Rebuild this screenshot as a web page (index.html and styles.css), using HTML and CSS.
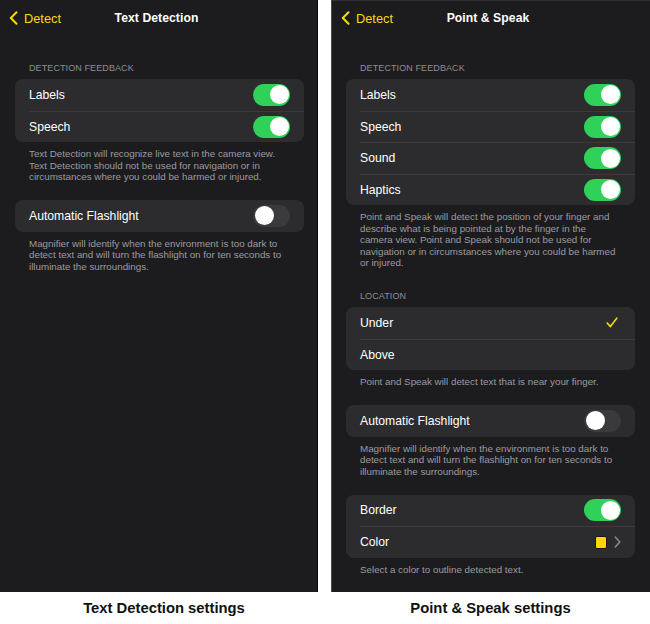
FILE: index.html
```html
<!DOCTYPE html>
<html lang="en">
<head>
<meta charset="utf-8">
<title>Text Detection and Point &amp; Speak settings</title>
<link rel="stylesheet" href="styles.css">
</head>
<body>
<div class="page">
  <div class="col col-left">
    <div class="panel panel-left">
      <div class="nav">
        <div class="back">
          <svg class="chev" width="9" height="14" viewBox="0 0 9 14"><path d="M7.5 1.2 L1.8 7 L7.5 12.8" fill="none" stroke="#f7da0c" stroke-width="2" stroke-linecap="round" stroke-linejoin="round"/></svg>
          <span>Detect</span>
        </div>
        <div class="title">Text Detection</div>
        <div></div>
      </div>
      <div class="header first">Detection Feedback</div>
      <div class="group">
        <div class="row"><span>Labels</span><span class="toggle on"></span></div>
        <div class="row"><span>Speech</span><span class="toggle on"></span></div>
      </div>
      <div class="footer">Text Detection will recognize live text in the camera view.<br>Text Detection should not be used for navigation or in<br>circumstances where you could be harmed or injured.</div>
      <div class="group spaced">
        <div class="row"><span>Automatic Flashlight</span><span class="toggle"></span></div>
      </div>
      <div class="footer">Magnifier will identify when the environment is too dark to<br>detect text and will turn the flashlight on for ten seconds to<br>illuminate the surroundings.</div>
    </div>
    <div class="caption caption-left">Text Detection settings</div>
  </div>

  <div class="col col-right">
    <div class="panel panel-right">
      <div class="nav">
        <div class="back">
          <svg class="chev" width="9" height="14" viewBox="0 0 9 14"><path d="M7.5 1.2 L1.8 7 L7.5 12.8" fill="none" stroke="#f7da0c" stroke-width="2" stroke-linecap="round" stroke-linejoin="round"/></svg>
          <span>Detect</span>
        </div>
        <div class="title">Point &amp; Speak</div>
        <div></div>
      </div>
      <div class="header first">Detection Feedback</div>
      <div class="group">
        <div class="row"><span>Labels</span><span class="toggle on"></span></div>
        <div class="row"><span>Speech</span><span class="toggle on"></span></div>
        <div class="row"><span>Sound</span><span class="toggle on"></span></div>
        <div class="row"><span>Haptics</span><span class="toggle on"></span></div>
      </div>
      <div class="footer">Point and Speak will detect the position of your finger and<br>describe what is being pointed at by the finger in the<br>camera view. Point and Speak should not be used for<br>navigation or in circumstances where you could be harmed<br>or injured.</div>
      <div class="header later">Location</div>
      <div class="group">
        <div class="row"><span>Under</span>
          <svg class="check" width="12" height="11" viewBox="0 0 12 11"><path d="M1.2 6 L4.4 9.6 L10.8 1.2" fill="none" stroke="#f7da0c" stroke-width="1.6" stroke-linecap="round" stroke-linejoin="round"/></svg>
        </div>
        <div class="row"><span>Above</span></div>
      </div>
      <div class="footer">Point and Speak will detect text that is near your finger.</div>
      <div class="group spaced">
        <div class="row"><span>Automatic Flashlight</span><span class="toggle"></span></div>
      </div>
      <div class="footer">Magnifier will identify when the environment is too dark to<br>detect text and will turn the flashlight on for ten seconds to<br>illuminate the surroundings.</div>
      <div class="group spaced">
        <div class="row"><span>Border</span><span class="toggle on"></span></div>
        <div class="row"><span>Color</span>
          <span class="color-value">
            <span class="swatch"></span>
            <svg class="disclosure" width="7" height="12" viewBox="0 0 7 12"><path d="M1.2 1 L5.8 6 L1.2 11" fill="none" stroke="#8e8e93" stroke-width="1.4" stroke-linecap="round" stroke-linejoin="round"/></svg>
          </span>
        </div>
      </div>
      <div class="footer">Select a color to outline detected text.</div>
    </div>
    <div class="caption">Point &amp; Speak settings</div>
  </div>
</div>
</body>
</html>
```

FILE: styles.css
```css
* { box-sizing: border-box; }

html, body {
  margin: 0;
  padding: 0;
  background: #ffffff;
}

body {
  font-family: "Liberation Sans", Arial, sans-serif;
  width: 650px;
  height: 624px;
  overflow: hidden;
}

.page {
  display: flex;
  gap: 13px;
  width: 650px;
}

.col-left { width: 318px; }
.col-right { width: 319px; }

.panel {
  height: 592px;
  background: #1c1c1e;
  color: #ffffff;
}

.panel-left {
  border-right: 1px solid #070708;
  padding: 0 13px 0 15px;
}

.panel-right {
  border-left: 1px solid #4a4a4d;
  border-top: 1px solid #2f2f31;
  padding: 0 15px 0 14px;
}

.nav {
  height: 36px;
  display: grid;
  grid-template-columns: 1fr auto 1fr;
  align-items: center;
  margin-left: -6px;
}

.panel-right .nav { margin-top: -1px; margin-left: -5px; }

.back {
  display: flex;
  align-items: center;
  gap: 6px;
  color: #f7da0c;
  font-size: 12.8px;
}

.chev { display: block; }

.title {
  font-size: 12.2px;
  font-weight: 700;
  letter-spacing: 0.05px;
}

.header {
  font-size: 9px;
  line-height: 11px;
  color: #8d8d93;
  text-transform: uppercase;
  padding-left: 14px;
  margin-bottom: 5.5px;
  letter-spacing: 0.1px;
}

.header.first { margin-top: 26.5px; }
.header.later { margin-top: 22px; }

.group {
  background: #2c2c2e;
  border-radius: 8px;
  overflow: hidden;
}

.group.spaced { margin-top: 17.5px; }

.row {
  height: 31.5px;
  margin-left: 14px;
  padding-right: 14px;
  display: flex;
  align-items: center;
  justify-content: space-between;
  font-size: 12.2px;
}

.row + .row { border-top: 1px solid #3b3b3e; }

.toggle {
  position: relative;
  width: 37px;
  height: 22px;
  border-radius: 11px;
  background: #3a3a3d;
  flex: none;
}

.toggle::after {
  content: "";
  position: absolute;
  top: 1.5px;
  left: 1.5px;
  width: 19px;
  height: 19px;
  border-radius: 50%;
  background: #ffffff;
}

.toggle.on { background: #30d158; }
.toggle.on::after { left: auto; right: 1.5px; }

.check { display: block; margin-right: 3px; }

.color-value {
  display: flex;
  align-items: center;
  gap: 7px;
}

.swatch {
  width: 12px;
  height: 13px;
  background: #ffd60a;
  border: 1px solid #17170f;
  border-radius: 2px;
}

.disclosure { display: block; }

.footer {
  padding: 6px 0 0 14px;
  font-size: 9.8px;
  line-height: 11.5px;
  color: #9b9ba1;
  white-space: nowrap;
}

.caption {
  height: 32px;
  line-height: 32px;
  text-align: center;
  font-size: 14.8px;
  font-weight: 700;
  color: #111111;
}

.caption-left { padding-left: 10px; }
```
